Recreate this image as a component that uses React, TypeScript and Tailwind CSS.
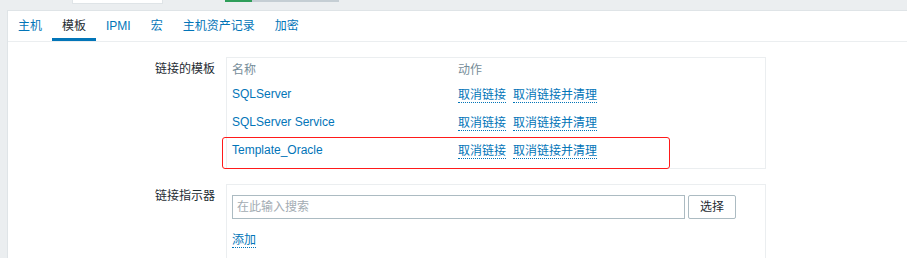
const font = { fontFamily: '"Liberation Sans", Arial, "Noto Sans CJK SC", sans-serif' }

const tabs = ['主机', '模板', 'IPMI', '宏', '主机资产记录', '加密']

const templates = ['SQLServer', 'SQLServer Service', 'Template_Oracle']

function ActionLink({ children }: { children: React.ReactNode }) {
  return (
    <span className="inline-block leading-[14px] text-[#0275b8] border-b border-dotted border-[#0275b8] cursor-pointer">
      {children}
    </span>
  )
}

export default function App() {
  return (
    <div
      className="relative w-[907px] h-[258px] overflow-hidden bg-[#ebeef0] text-[12px] text-[#1f2c33]"
      style={font}
    >
      {/* cut-off bits of the header above */}
      <div className="flex items-start h-[10px]">
        <div className="ml-[72px] w-[91px] h-[4px] bg-white border border-t-0 border-[#dfe4e7]" />
        <div className="ml-[62px] w-[27px] h-[2px] bg-[#2f9e5a]" />
        <div className="w-[87px] h-[2px] bg-[#c5ced4]" />
      </div>

      <div className="ml-[7px] h-[248px] bg-white border-l border-t border-[#dfe4e7]">
        {/* tabs */}
        <div className="flex h-[31px] border-b border-[#ebeef0]">
          {tabs.map((t) => (
            <div
              key={t}
              className={
                t === '模板'
                  ? 'flex items-center px-[10px] pt-[3px] border-b-[3px] border-[#0275b8] text-[#1f2c33] leading-[14px]'
                  : 'flex items-center px-[10px] text-[#0275b8] leading-[14px]'
              }
            >
              {t}
            </div>
          ))}
        </div>

        {/* form */}
        <div className="pt-[15px] grid grid-cols-[207px_540px] gap-x-[11px] gap-y-[15px]">
          <div className="text-right pt-[5px] leading-[14px]">链接的模板</div>
          <div className="border border-[#ebeef0] px-[5px] pb-[4px]">
            <div className="grid grid-cols-[226px_1fr] h-[22px] pt-[5px] text-[#768d99] leading-[14px]">
              <span>名称</span>
              <span>动作</span>
            </div>
            {templates.map((name) => (
              <div key={name} className="grid grid-cols-[226px_1fr] h-[28px] items-center leading-[14px]">
                <span className="text-[#0275b8]">{name}</span>
                <div className="flex gap-[7px] pt-[2px]">
                  <ActionLink>取消链接</ActionLink>
                  <ActionLink>取消链接并清理</ActionLink>
                </div>
              </div>
            ))}
          </div>

          <div className="text-right pt-[5px] leading-[14px]">链接指示器</div>
          <div className="border border-[#ebeef0] px-[5px] pt-[10px] pb-[11px]">
            <div className="flex gap-[3px]">
              <input
                className="w-[453px] h-[24px] border border-[#acbbc2] px-[4px] text-[12px] outline-none placeholder:text-[#a3acb3]"
                style={font}
                placeholder="在此输入搜索"
              />
              <button className="w-[48px] h-[24px] border border-[#acbbc2] rounded-[2px] bg-white text-[#1f2c33] text-[12px]">
                选择
              </button>
            </div>
            <div className="mt-[12px]">
              <ActionLink>添加</ActionLink>
            </div>
          </div>
        </div>
      </div>

      {/* red annotation box */}
      <div className="absolute left-[222px] top-[137px] w-[448px] h-[32px] border border-[#ff1a1a] rounded-[3px] pointer-events-none" />
    </div>
  )
}
